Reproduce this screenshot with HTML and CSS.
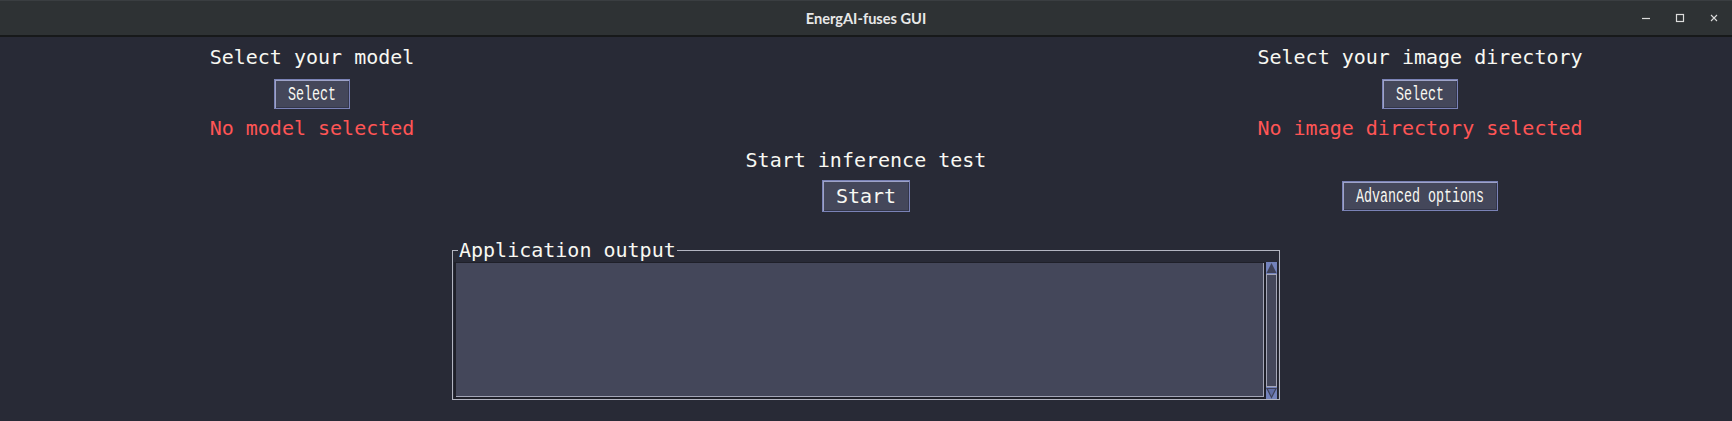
FILE: index.html
```html
<!DOCTYPE html>
<html lang="en">
<head>
<meta charset="utf-8">
<title>EnergAI-fuses GUI</title>
<link rel="stylesheet" href="styles.css">
</head>
<body>
<div class="window">
  <header class="titlebar">
    <div class="spacer"></div>
    <div class="title">EnergAI-fuses GUI</div>
    <div class="controls">
      <span class="ctl"><svg width="10" height="10" viewBox="0 0 10 10"><line x1="1" y1="5.5" x2="9" y2="5.5" stroke="#dcdcdc" stroke-width="1.2"/></svg></span>
      <span class="ctl"><svg width="10" height="10" viewBox="0 0 10 10"><rect x="1.5" y="1.5" width="7" height="7" fill="none" stroke="#dcdcdc" stroke-width="1.2"/></svg></span>
      <span class="ctl"><svg width="10" height="10" viewBox="0 0 10 10"><path d="M2 2 L8 8 M8 2 L2 8" stroke="#dcdcdc" stroke-width="1.1"/></svg></span>
    </div>
  </header>
  <main class="content">
    <div class="grid">
      <div class="label col-left row-1">Select your model</div>
      <div class="label col-right row-1">Select your image directory</div>

      <button class="btn btn-select col-left row-2"><span class="narrow">Select</span></button>
      <button class="btn btn-select col-right row-2"><span class="narrow">Select</span></button>

      <div class="label status col-left row-3">No model selected</div>
      <div class="label status col-right row-3">No image directory selected</div>

      <div class="label col-mid row-4">Start inference test</div>

      <button class="btn btn-start col-mid row-5">Start</button>
      <button class="btn btn-advanced col-right row-5"><span class="narrow">Advanced options</span></button>
    </div>

    <fieldset class="output">
      <legend>Application output</legend>
      <div class="output-body">
        <div class="textbox"></div>
        <div class="scrollbar">
          <div class="arrow"><svg width="11" height="12" viewBox="0 0 11 12"><polygon points="5.5,1 10.5,11 0.5,11" fill="#3e4157"/></svg></div>
          <div class="thumb"></div>
          <div class="arrow"><svg width="11" height="12" viewBox="0 0 11 12"><polygon points="1,1.5 10,1.5 5.5,10.5" fill="#5f6ca3" stroke="#3e4157" stroke-width="1.2"/></svg></div>
        </div>
      </div>
    </fieldset>
  </main>
</div>
</body>
</html>
```

FILE: styles.css
```css
* {
  box-sizing: border-box;
}

body {
  margin: 0;
  background: #282a36;
}

.window {
  width: 1732px;
  height: 421px;
  background: #282a36;
  overflow: hidden;
  display: flex;
  flex-direction: column;
}

.titlebar {
  flex: none;
  height: 37px;
  background: #2e3234;
  border-top: 1px solid #3a3e41;
  border-bottom: 2px solid #17191a;
  display: grid;
  grid-template-columns: 1fr auto 1fr;
  align-items: center;
}

.title {
  font: 700 14.6px Lato, "Noto Sans", sans-serif;
  color: #e8e8e8;
  padding-top: 1px;
}

.controls {
  justify-self: end;
  display: flex;
  padding-right: 1px;
}

.ctl {
  width: 34px;
  height: 34px;
  display: flex;
  align-items: center;
  justify-content: center;
}

.ctl svg {
  display: block;
}

.content {
  padding-top: 8px;
}

.grid {
  display: grid;
  grid-template-columns: 624px 484px 624px;
  grid-template-rows: 24px 40px 31px 32px 40px;
  align-items: end;
  justify-items: center;
}

.col-left { grid-column: 1; }
.col-mid { grid-column: 2; }
.col-right { grid-column: 3; }
.row-1 { grid-row: 1; }
.row-2 { grid-row: 2; }
.row-3 { grid-row: 3; }
.row-4 { grid-row: 4; }
.row-5 { grid-row: 5; }

.label {
  font: 20px/24px "DejaVu Sans Mono", monospace;
  color: #f8f8f2;
  white-space: nowrap;
}

.status {
  color: #ff5555;
}

.btn {
  margin: 0;
  padding: 0;
  background: #44475a;
  border: 1px solid #7a82b6;
  box-shadow: inset 1px 1px 0 #9ea3c8, inset -1px -1px 0 #33364a;
  color: #f8f8f2;
  display: flex;
  align-items: center;
  justify-content: center;
  overflow: visible;
}

.btn-select {
  width: 76px;
  height: 30px;
  padding-top: 1px;
}

.btn-start {
  width: 88px;
  height: 32px;
  font: 20px/24px "DejaVu Sans Mono", monospace;
}

.btn-advanced {
  width: 156px;
  height: 30px;
  margin-bottom: 1px;
  padding-top: 1px;
}

.narrow {
  flex: none;
  display: inline-block;
  font: 20px/24px "Liberation Mono", monospace;
  transform: scaleX(0.667);
  white-space: nowrap;
}

.output {
  width: 828px;
  min-inline-size: 0;
  margin: 27px auto 0;
  padding: 0 1px;
  border: 1px solid #b3b5c1;
}

.output legend {
  margin-left: 4px;
  padding: 0 1px;
  font: 20px/23px "DejaVu Sans Mono", monospace;
  color: #f8f8f2;
  white-space: nowrap;
}

.output-body {
  display: flex;
  height: 137px;
}

.textbox {
  flex: 1;
  background: #44475a;
  border-style: solid;
  border-color: #1f2029;
  border-width: 1px 1px 2px 2px;
  box-shadow: inset -1px -1px 0 #a4a6b7;
}

.scrollbar {
  width: 13px;
  flex: none;
  display: flex;
  flex-direction: column;
  background: #1f2029;
  padding: 0 1px;
}

.arrow {
  height: 12px;
  flex: none;
  background: #7382bb;
}

.arrow svg {
  display: block;
}

.thumb {
  flex: 1;
  background: #44475a;
  border: 1px solid #a4a6b7;
}
```
